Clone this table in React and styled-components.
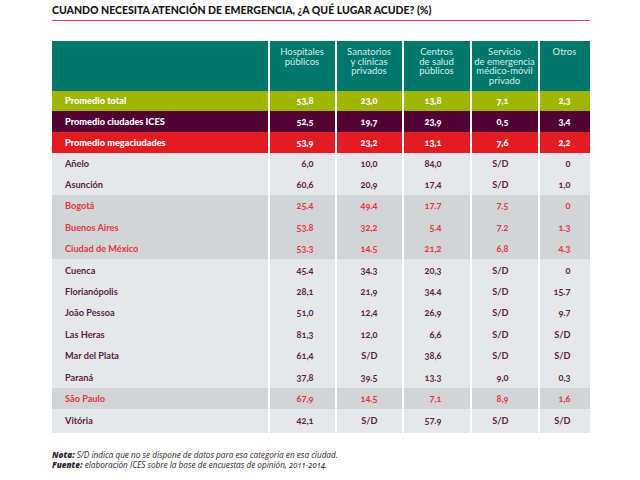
import React from 'react';
import styled, {createGlobalStyle} from 'styled-components';

const GlobalStyle = createGlobalStyle`
    html, body {
        margin: 0;
        padding: 0;
        background: #fff;
    }
    body {
        font-family: Lato, "Open Sans", sans-serif;
    }
`

const COLS = '215.5px 65px 65px 66px 66px 50px';

const Page = styled.div`
    width: 640px;
    height: 480px;
    padding: 6px 0 0 52px;
    box-sizing: border-box;
`

const Title = styled.h1`
    margin: 0;
    width: 538px;
    font-size: 10.5px;
    line-height: 9px;
    font-weight: 900;
    color: #1a1419;
    padding-bottom: 4.5px;
    border-bottom: 1.5px solid #e2414b;
    white-space: nowrap;
`

const Table = styled.div`
    margin-top: 20.5px;
    width: 537.5px;
    display: flex;
    flex-direction: column;
`

const Row = styled.div`
    display: grid;
    grid-template-columns: ${COLS};
    column-gap: 2px;
    height: ${p => p.$h}px;
    background: #fff;
`

const HeadCell = styled.div`
    background: #00776b;
    color: #d6efea;
    font-size: 9.5px;
    line-height: 9.6px;
    text-align: center;
    padding-top: 6px;
    white-space: pre-line;
`

const LabelCell = styled.div`
    background: ${p => p.$bg};
    color: ${p => p.$fg};
    font-size: 9.2px;
    font-weight: ${p => p.$heavy ? 900 : 700};
    display: flex;
    align-items: center;
    padding-left: 13px;
    white-space: nowrap;
`

const NumCell = styled.div`
    background: ${p => p.$bg};
    color: ${p => p.$fg};
    font-size: 9.2px;
    font-weight: ${p => p.$heavy ? 900 : 700};
    font-variant-numeric: oldstyle-nums;
    display: flex;
    align-items: center;
    justify-content: flex-end;
    padding-right: ${p => p.$pr}px;
`

const Notes = styled.div`
    margin-top: 17px;
    font-family: "Open Sans", Lato, sans-serif;
    font-style: italic;
    font-size: 8.2px;
    line-height: 10.5px;
    color: #2e2330;
    font-variant-numeric: oldstyle-nums;

    b {
        font-weight: 800;
    }
`

const headers = [
    '',
    'Hospitales\npúblicos',
    'Sanatorios\ny clínicas\nprivados',
    'Centros\nde salud\npúblicos',
    'Servicio\nde emergencia\nmédico-móvil\nprivado',
    'Otros',
];

const pads = [21, 24, 28, 29, 19];

const summary = [
    {name: 'Promedio total', bg: '#9fb602', h: 20, vals: ['53,8', '23,0', '13,8', '7,1', '2,3']},
    {name: 'Promedio ciudades ICES', bg: '#510034', h: 21.5, vals: ['52,5', '19,7', '23,9', '0,5', '3,4']},
    {name: 'Promedio megaciudades', bg: '#e31b23', h: 20.5, vals: ['53,9', '23,2', '13,1', '7,6', '2,2']},
];

const cities = [
    {name: 'Añelo', vals: ['6,0', '10,0', '84,0', 'S/D', '0']},
    {name: 'Asunción', vals: ['60,6', '20,9', '17,4', 'S/D', '1,0']},
    {name: 'Bogotá', mega: true, vals: ['25.4', '49.4', '17.7', '7.5', '0']},
    {name: 'Buenos Aires', mega: true, vals: ['53.8', '32,2', '5.4', '7.2', '1.3']},
    {name: 'Ciudad de México', mega: true, vals: ['53.3', '14.5', '21,2', '6,8', '4.3']},
    {name: 'Cuenca', vals: ['45.4', '34.3', '20,3', 'S/D', '0']},
    {name: 'Florianópolis', vals: ['28,1', '21,9', '34.4', 'S/D', '15.7']},
    {name: 'João Pessoa', vals: ['51,0', '12,4', '26,9', 'S/D', '9.7']},
    {name: 'Las Heras', vals: ['81,3', '12,0', '6,6', 'S/D', 'S/D']},
    {name: 'Mar del Plata', vals: ['61,4', 'S/D', '38,6', 'S/D', 'S/D']},
    {name: 'Paraná', vals: ['37,8', '39.5', '13.3', '9,0', '0,3']},
    {name: 'São Paulo', mega: true, vals: ['67,9', '14.5', '7,1', '8,9', '1,6']},
    {name: 'Vitória', vals: ['42,1', 'S/D', '57.9', 'S/D', 'S/D']},
];

const App = () => {
    return (
        <Page>
            <GlobalStyle />
            <Title>CUANDO NECESITA ATENCIÓN DE EMERGENCIA, ¿A QUÉ LUGAR ACUDE? (%)</Title>
            <Table>
                <Row $h={49.5}>
                    {headers.map((h, i) => <HeadCell key={i}>{h}</HeadCell>)}
                </Row>
                {summary.map((row) => (
                    <Row key={row.name} $h={row.h}>
                        <LabelCell $bg={row.bg} $fg="#fff" $heavy>{row.name}</LabelCell>
                        {row.vals.map((v, i) =>
                            <NumCell key={i} $bg={row.bg} $fg="#fff" $pr={pads[i]} $heavy>{v}</NumCell>
                        )}
                    </Row>
                ))}
                {cities.map((row, r) => {
                    const bg = row.mega ? '#d3d4d6' : '#e6e7e9';
                    const fg = row.mega ? '#e3353f' : '#5a1d45';
                    return (
                        <Row key={row.name} $h={r === cities.length - 1 ? 23.5 : 21.4}>
                            <LabelCell $bg={bg} $fg={fg}>{row.name}</LabelCell>
                            {row.vals.map((v, i) =>
                                <NumCell key={i} $bg={bg} $fg={fg} $pr={pads[i]}>{v}</NumCell>
                            )}
                        </Row>
                    )
                })}
            </Table>
            <Notes>
                <div><b>Nota:</b> S/D indica que no se dispone de datos para esa categoría en esa ciudad.</div>
                <div><b>Fuente:</b> elaboración ICES sobre la base de encuestas de opinión, 2011-2014.</div>
            </Notes>
        </Page>
    )
}

export default App
